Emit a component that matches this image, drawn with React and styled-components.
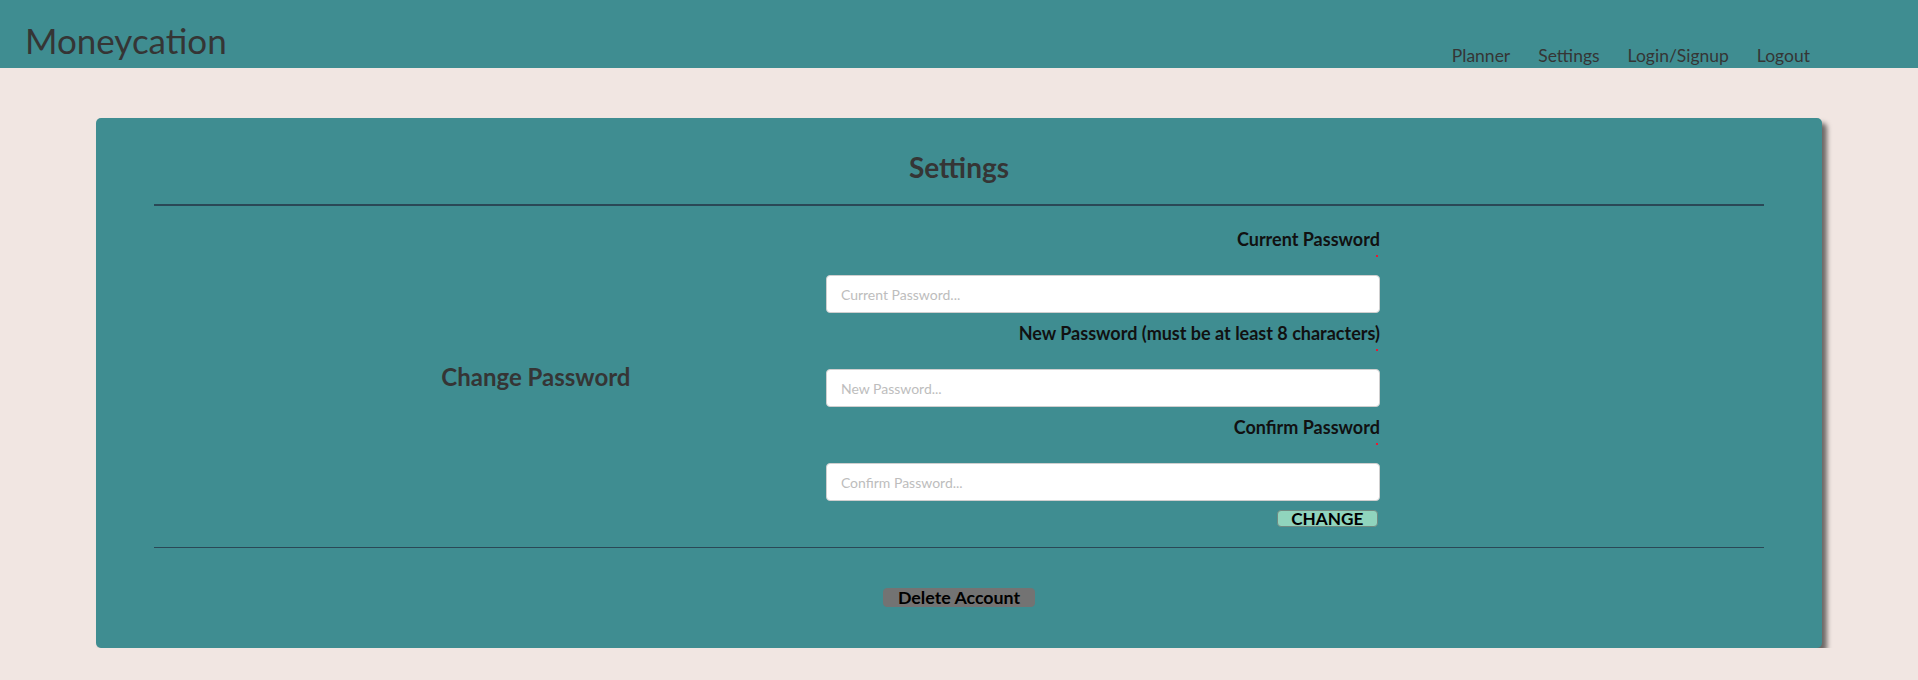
import React from 'react';
import styled, { createGlobalStyle } from 'styled-components';

const GlobalStyle = createGlobalStyle`
	body {
		margin: 0;
		background: #f1e6e2;
		font-family: Lato, "Open Sans", sans-serif;
		color: #353535;
	}
	* {
		box-sizing: border-box;
	}
`

const Header = styled.header`
	display: flex;
	justify-content: space-between;
	align-items: flex-start;
	height: 68px;
	background: #3f8d91;
	padding: 0 108px 0 25px;
`

const Logo = styled.div`
	font-size: 35px;
	line-height: 42px;
	margin-top: 19px;
	color: #353535;
`

const Nav = styled.nav`
	display: flex;
	gap: 28px;
	margin-top: 45px;
`

const NavLink = styled.a`
	font-size: 17.5px;
	line-height: 22px;
	color: #353535;
	text-decoration: none;
`

const Card = styled.main`
	width: 90%;
	margin: 50px auto 0;
	background: #3f8d91;
	border-radius: 5px;
	box-shadow: 5px 5px 5px rgba(0, 0, 0, 0.55);
	padding: 32px 58px 41px;
`

const Title = styled.h2`
	margin: 0;
	text-align: center;
	font-size: 28px;
	line-height: 34px;
	font-weight: 700;
	color: #353535;
`

const Rule = styled.hr`
	margin: ${props => props.top || 0}px 0 0;
	border: none;
	height: ${props => props.thick}px;
	background: #2a4856;
`

const Row = styled.section`
	display: grid;
	grid-template-columns: 672px 554px;
	align-items: center;
	padding: 21px 0 20px;
`

const SectionName = styled.h3`
	margin: 0;
	padding-left: 92px;
	text-align: center;
	font-size: 24px;
	line-height: 30px;
	font-weight: 700;
	color: #353535;
`

const Form = styled.form`
	display: flex;
	flex-direction: column;
`

const Field = styled.div`
	display: flex;
	flex-direction: column;
	margin-bottom: ${props => props.last ? 9 : 8}px;
`

const Label = styled.label`
	text-align: right;
	font-size: 18px;
	line-height: 24px;
	font-weight: 700;
	color: #111;
`

const Required = styled.span`
	align-self: flex-end;
	width: 2px;
	height: 2px;
	margin: 4px 2px 18px 0;
	background: #ec1832;
`

const Input = styled.input`
	height: 38px;
	width: 100%;
	padding: 0 14px;
	border: 1px solid #cfcfcf;
	border-radius: 4px;
	background: #fff;
	font-family: Lato, sans-serif;
	font-size: 14px;
	outline: none;

	&::placeholder {
		color: #bdbdbd;
	}
`

const Button = styled.button`
	height: ${props => props.h}px;
	padding: 0 ${props => props.px}px;
	border: 1px solid ${props => props.edge};
	border-radius: 4px;
	background: ${props => props.bg};
	font-family: Lato, sans-serif;
	font-size: ${props => props.size}px;
	line-height: ${props => props.h - 2}px;
	font-weight: 700;
	color: #000;
	cursor: pointer;
`

const Actions = styled.div`
	display: flex;
	justify-content: flex-end;
	padding-right: 2px;
`

const Footer = styled.div`
	display: flex;
	justify-content: center;
	margin-top: 40px;
`

const fields = [
	{ label: 'Current Password', placeholder: 'Current Password...' },
	{ label: 'New Password (must be at least 8 characters)', placeholder: 'New Password...' },
	{ label: 'Confirm Password', placeholder: 'Confirm Password...' },
]

const App = () => {
	return (
		<>
			<GlobalStyle />
			<Header>
				<Logo>Moneycation</Logo>
				<Nav>
					<NavLink href="#">Planner</NavLink>
					<NavLink href="#">Settings</NavLink>
					<NavLink href="#">Login/Signup</NavLink>
					<NavLink href="#">Logout</NavLink>
				</Nav>
			</Header>
			<Card>
				<Title>Settings</Title>
				<Rule thick={2} top={20} />
				<Row>
					<SectionName>Change Password</SectionName>
					<Form onSubmit={e => e.preventDefault()}>
						{fields.map((field, i) => (
							<Field key={field.label} last={i === fields.length - 1}>
								<Label>{field.label}</Label>
								<Required />
								<Input type="password" placeholder={field.placeholder} />
							</Field>
						))}
						<Actions>
							<Button h={17} px={13.5} size={17.2} bg="#90d4bd" edge="#6f8a82">CHANGE</Button>
						</Actions>
					</Form>
				</Row>
				<Rule thick={1} />
				<Footer>
					<Button h={19} px={14} size={17.8} bg="#737373" edge="#737373">Delete Account</Button>
				</Footer>
			</Card>
		</>
	)
}

export default App
